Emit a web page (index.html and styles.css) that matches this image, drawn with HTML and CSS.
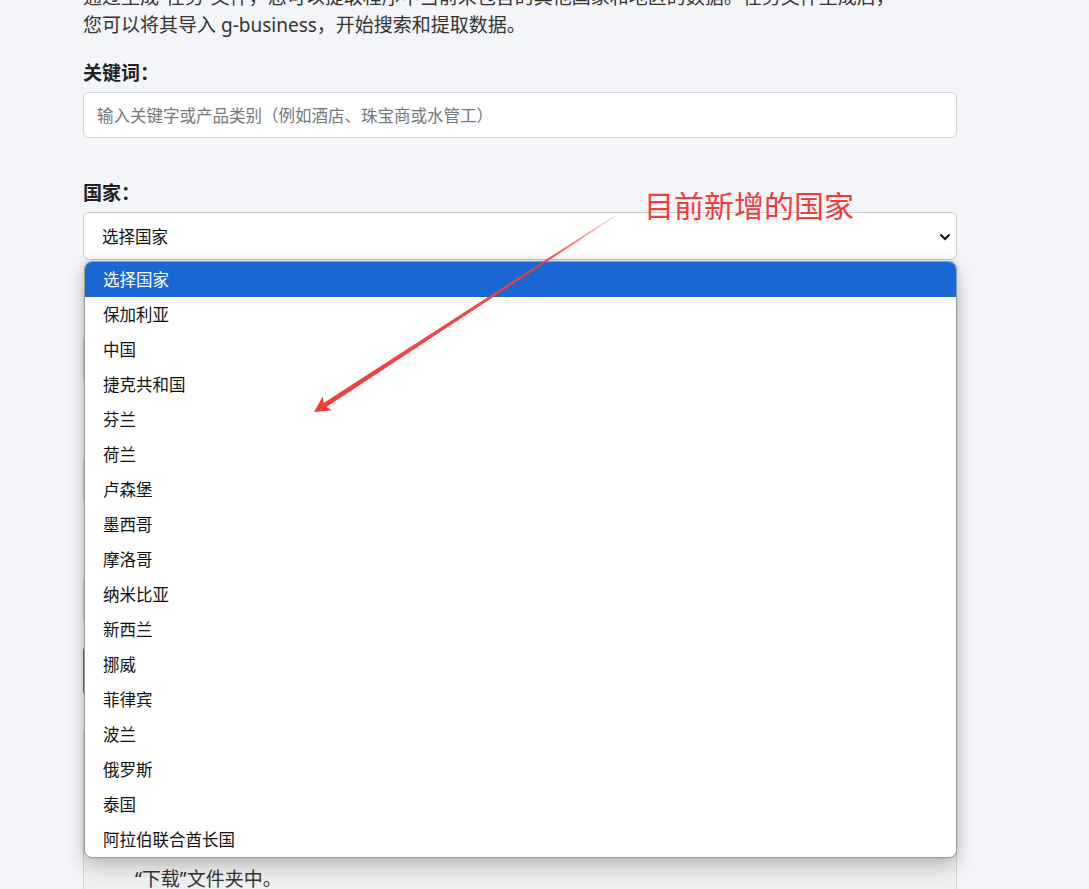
FILE: index.html
```html
<!DOCTYPE html>
<html lang="zh-CN">
<head>
<meta charset="utf-8">
<title>任务文件</title>
<link rel="stylesheet" href="styles.css">
</head>
<body>
<main class="page">
  <p class="intro">通过生成“任务”文件，您可以提取程序中当前未包含的其他国家和地区的数据。任务文件生成后，<br>您可以将其导入 g-business，开始搜索和提取数据。</p>

  <div class="group">
    <div class="label">关键词：</div>
    <div class="input"><span class="placeholder">输入关键字或产品类别（例如酒店、珠宝商或水管工）</span></div>
  </div>

  <div class="group country">
    <div class="label">国家：</div>
    <div class="select">
      <span>选择国家</span>
      <svg class="chev" width="12" height="8" viewBox="0 0 12 8"><polyline points="1.5,1.5 6,6 10.5,1.5" fill="none" stroke="#111" stroke-width="2"/></svg>
    </div>
    <ul class="dropdown">
      <li class="active">选择国家</li>
      <li>保加利亚</li>
      <li>中国</li>
      <li>捷克共和国</li>
      <li>芬兰</li>
      <li>荷兰</li>
      <li>卢森堡</li>
      <li>墨西哥</li>
      <li>摩洛哥</li>
      <li>纳米比亚</li>
      <li>新西兰</li>
      <li>挪威</li>
      <li>菲律宾</li>
      <li>波兰</li>
      <li>俄罗斯</li>
      <li>泰国</li>
      <li>阿拉伯联合酋长国</li>
    </ul>
  </div>

  <!-- form controls hidden under the open list; only their edges show -->
  <div class="group">
    <div class="label-space"></div>
    <div class="select"></div>
  </div>

  <div class="group">
    <div class="label-space"></div>
    <div class="input"></div>
  </div>

  <div class="group">
    <div class="label-space"></div>
    <div class="input"></div>
  </div>

  <div class="btn"></div>

  <div class="notes">
    <div class="line-space"></div>
    <div class="line-space"></div>
    <div class="line-space"></div>
    <div class="line-space"></div>
    <div class="line">“下载”文件夹中。</div>
  </div>
</main>

<div class="note-text">目前新增的国家</div>
<svg class="arrow" width="1089" height="889" viewBox="0 0 1089 889">
  <defs>
    <linearGradient id="fade" gradientUnits="userSpaceOnUse" x1="615" y1="216" x2="314" y2="412">
      <stop offset="0" stop-color="#f43b3b" stop-opacity="0.15"/>
      <stop offset="0.2" stop-color="#f43b3b" stop-opacity="0.9"/>
      <stop offset="1" stop-color="#f43b3b" stop-opacity="1"/>
    </linearGradient>
  </defs>
  <polygon fill="url(#fade)" points="615.4,216.5 326.3,406.9 331.9,410.2 314,412 322.8,396.4 323.6,402.9 614.6,215.5"/>
</svg>
</body>
</html>
```

FILE: styles.css
```css
* { box-sizing: border-box; }

body {
  margin: 0;
  width: 1089px;
  height: 889px;
  overflow: hidden;
  position: relative;
  background: #f4f5f9;
  font-family: "Noto Sans", "Noto Sans CJK SC", sans-serif;
  color: #212529;
}

.page {
  margin-left: 83px;
  width: 874px;
}

.intro {
  margin: -17px 0 20px;
  font-size: 19px;
  line-height: 28px;
  color: #333;
}

.group {
  margin-bottom: 41px;
}

.group.country {
  position: relative;
}

.label {
  font-size: 19px;
  line-height: 28px;
  font-weight: 700;
  color: #222;
  margin-bottom: 5px;
}

.label-space {
  height: 28px;
  margin-bottom: 5px;
}

.input {
  height: 46px;
  background: #fff;
  border: 1px solid #ced4da;
  border-radius: 6px;
  padding-left: 13px;
  display: flex;
  align-items: center;
}

.placeholder {
  font-size: 16.5px;
  color: #74787d;
}

.select {
  height: 48px;
  background: #fff;
  border: 1px solid #c8ccd1;
  border-radius: 6px;
  padding: 0 5px 0 18px;
  display: flex;
  align-items: center;
  justify-content: space-between;
  font-size: 16.5px;
  color: #111;
}

.chev {
  display: block;
  margin-top: 1px;
}

.dropdown {
  position: absolute;
  top: 82px;
  left: 1px;
  right: 0;
  margin: 0;
  padding: 0;
  list-style: none;
  background: #fff;
  border: 1px solid #9a9a9a;
  border-radius: 8px;
  overflow: hidden;
  box-shadow: 0 8px 20px rgba(0, 0, 0, 0.22), 0 0 6px rgba(0, 0, 0, 0.12);
  z-index: 5;
}

.dropdown li {
  height: 35px;
  line-height: 35px;
  padding-left: 18px;
  font-size: 16.5px;
  color: #111;
}

.dropdown li.active {
  background: #1967d2;
  color: #fff;
}

.btn {
  height: 52px;
  margin-top: -18px;
  border-radius: 6px;
  background: #2f74c0;
}

.notes {
  margin-top: 30px;
  padding: 7px 20px 20px 51px;
  background: #f0f0f0;
  border: 1px solid #d6d6d6;
  border-radius: 6px;
  font-size: 19px;
  color: #333;
}

.notes .line {
  line-height: 32px;
  white-space: nowrap;
}

.notes .line-space {
  height: 32px;
}

.note-text {
  position: absolute;
  left: 644px;
  top: 191px;
  font-size: 30px;
  line-height: 30px;
  color: #f23c3c;
  z-index: 6;
}

.arrow {
  position: absolute;
  left: 0;
  top: 0;
  pointer-events: none;
  z-index: 7;
}
```
